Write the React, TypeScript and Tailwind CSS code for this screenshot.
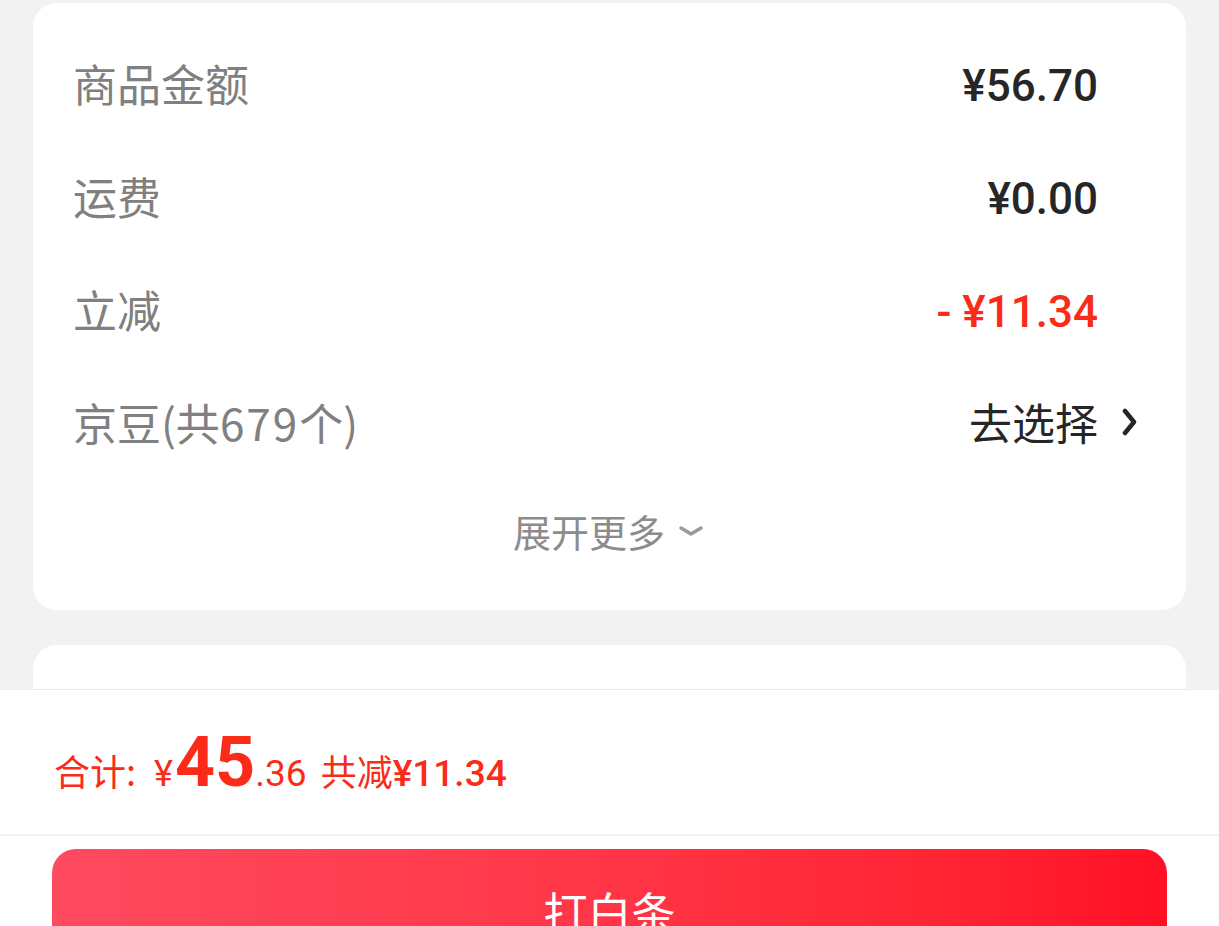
const cjk = "font-['Noto_Sans_CJK_SC',sans-serif]";
const num = "font-['Roboto','Noto_Sans_CJK_SC',sans-serif]";
const value = `${num} pt-[6px] text-[44px] font-medium leading-none`;

const Row = ({ label, children }: { label: string; children: React.ReactNode }) => {
  return (
    <div className="flex h-[113px] items-center justify-between">
      <span className={`${cjk} text-[44px] leading-none text-[#808080]`}>{label}</span>
      {children}
    </div>
  );
};

const App = () => {
  return (
    <div className="flex h-[926px] w-full flex-col overflow-hidden bg-[#f2f2f2]">
      <div className="flex-1 overflow-hidden px-[33px] pt-[3px]">
        <div className="rounded-[24px] bg-white pb-[26px] pl-[40px] pr-[88px] pt-[23px]">
          <Row label="商品金额">
            <span className={`${value} text-[#262626]`}>¥56.70</span>
          </Row>
          <Row label="运费">
            <span className={`${value} text-[#262626]`}>¥0.00</span>
          </Row>
          <Row label="立减">
            <span className={`${value} text-[#fa2c19]`}>- ¥11.34</span>
          </Row>
          <div className="mr-[-40px] flex h-[113px] items-center justify-between">
            <span className={`${cjk} text-[44px] leading-none text-[#808080]`}>
              京豆(共<span className="tracking-[2px]">679</span>个)
            </span>
            <div className="flex items-center gap-[24px]">
              <span className={`${cjk} text-[43px] leading-none text-[#262626]`}>去选择</span>
              <svg width="16" height="28" viewBox="0 0 16 28">
                <path d="M3 3 L12 14 L3 25" fill="none" stroke="#262626" strokeWidth="4.5" strokeLinejoin="round" strokeLinecap="round" />
              </svg>
            </div>
          </div>
          <div className="mr-[-47px] flex h-[106px] items-center justify-center gap-[12px]">
            <span className={`${cjk} text-[38px] leading-none text-[#8c8c8c]`}>展开更多</span>
            <svg width="28" height="14" viewBox="0 0 28 14">
              <path d="M4 4 L14 10 L24 4" fill="none" stroke="#9a9a9a" strokeWidth="3.5" strokeLinejoin="round" strokeLinecap="round" />
            </svg>
          </div>
        </div>
        <div className="mt-[35px] h-[400px] rounded-t-[24px] bg-white"></div>
      </div>
      <div className="h-[237px] shrink-0 border-t border-[#ececec] bg-white">
        <div className="flex h-[146px] items-center border-b-2 border-[#f2f2f2] pl-[54px]">
          <div className="flex items-baseline text-[#fa2c19]">
            <span className={`${cjk} text-[36px] leading-none`}>合计:</span>
            <span className={`${num} ml-[18px] text-[36px] leading-none`}>¥</span>
            <span className={`${num} ml-[2px] text-[70px] font-bold leading-none`}>45</span>
            <span className={`${num} text-[37px] leading-none`}>.36</span>
            <span className={`${cjk} ml-[14px] text-[36px] leading-none`}>共减</span>
            <span className={`${num} text-[37px] font-medium leading-none`}>¥11.34</span>
          </div>
        </div>
        <div className="px-[52px] pt-[13px]">
          <div className="flex h-[124px] items-center justify-center rounded-[24px] bg-gradient-to-r from-[#ff4a60] to-[#ff1024]">
            <span className={`${cjk} text-[44px] leading-none text-white`}>打白条</span>
          </div>
        </div>
      </div>
    </div>
  );
};

export default App;
